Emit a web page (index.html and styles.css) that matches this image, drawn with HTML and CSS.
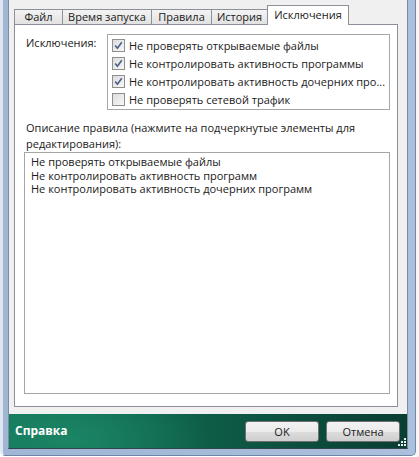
FILE: index.html
```html
<!DOCTYPE html>
<html lang="ru">
<head>
<meta charset="utf-8">
<link rel="stylesheet" href="styles.css">
</head>
<body>
<div class="screen">
  <div class="frame">
    <div class="dialog">
      <div class="tabs">
        <div class="tab t1">Файл</div>
        <div class="tab t2">Время запуска</div>
        <div class="tab t3">Правила</div>
        <div class="tab t4">История</div>
        <div class="tab active">Исключения</div>
      </div>
      <div class="panel">
        <div class="excl">
          <div class="label">Исключения:</div>
          <div class="list">
            <div class="item"><span class="cb checked"><svg viewBox="0 0 9 9" width="9" height="9"><path d="M1.2 4.6 L3.4 7.2 L7.8 1.2" fill="none" stroke="#4a5f86" stroke-width="1.6"/></svg></span>Не проверять открываемые файлы</div>
            <div class="item"><span class="cb checked"><svg viewBox="0 0 9 9" width="9" height="9"><path d="M1.2 4.6 L3.4 7.2 L7.8 1.2" fill="none" stroke="#4a5f86" stroke-width="1.6"/></svg></span>Не контролировать активность программы</div>
            <div class="item"><span class="cb checked"><svg viewBox="0 0 9 9" width="9" height="9"><path d="M1.2 4.6 L3.4 7.2 L7.8 1.2" fill="none" stroke="#4a5f86" stroke-width="1.6"/></svg></span>Не контролировать активность дочерних про...</div>
            <div class="item"><span class="cb"></span>Не проверять сетевой трафик</div>
          </div>
        </div>
        <div class="desc-label">Описание правила (нажмите на подчеркнутые элементы для редактирования):</div>
        <div class="desc">
          <div>Не проверять открываемые файлы</div>
          <div>Не контролировать активность программ</div>
          <div>Не контролировать активность дочерних программ</div>
        </div>
      </div>
      <div class="footer">
        <div class="help">Справка</div>
        <div class="buttons">
          <div class="btn">OK</div>
          <div class="btn">Отмена</div>
        </div>
        <svg class="grip" width="8" height="8" viewBox="0 0 8 8"><rect x="6" y="0" width="2" height="2" fill="#e8eef0"/><rect x="3" y="3" width="2" height="2" fill="#e8eef0"/><rect x="6" y="3" width="2" height="2" fill="#e8eef0"/><rect x="0" y="6" width="2" height="2" fill="#e8eef0"/><rect x="3" y="6" width="2" height="2" fill="#e8eef0"/><rect x="6" y="6" width="2" height="2" fill="#e8eef0"/></svg>
      </div>
    </div>
  </div>
  <div class="desktop"></div>
</div>
</body>
</html>
```
FILE: styles.css
```css
html, body {
  margin: 0;
  padding: 0;
}
body {
  width: 419px;
  height: 457px;
  overflow: hidden;
  font-family: "Open Sans", "DejaVu Sans", sans-serif;
  font-size: 11px;
  color: #1a1a1a;
  background: #ffffff;
}
.screen {
  display: flex;
  height: 457px;
}
.frame {
  width: 416px;
  box-sizing: border-box;
  height: 456px;
  background: linear-gradient(90deg, #9fb6d4, #aac0dc);
  border-left: 3px solid #dfe7f1;
  border-right: 1px solid #6f86a8;
  border-bottom: 1px solid #6f86a8;
  border-bottom-left-radius: 5px;
  border-bottom-right-radius: 5px;
  padding: 0 7px 6px 5px;
}
.desktop {
  flex: 1;
  background: #f4f6fa;
}
.dialog {
  background: #f0f0f0;
  height: 449px;
  border-left: 1px solid #7b8ba3;
  border-right: 1px solid #7b8ba3;
  border-bottom: 1px solid #33434f;
  box-sizing: border-box;
  display: flex;
  flex-direction: column;
}
.tabs {
  display: flex;
  align-items: flex-end;
  height: 19px;
  padding: 5px 0 0 5px;
  position: relative;
  z-index: 2;
}
.tab {
  height: 15px;
  box-sizing: border-box;
  border: 1px solid #8d9098;
  border-bottom: none;
  border-right: none;
  background: linear-gradient(#f3f3f3, #e2e2e2);
  padding: 0;
  text-align: center;
  white-space: nowrap;
  line-height: 14px;
}
.t1 { width: 48px; }
.t2 { width: 89px; }
.t3 { width: 60px; }
.t4 { width: 56px; }
.tab.active {
  width: 82px;
  height: 20px;
  background: #ffffff;
  border-right: 1px solid #8d9098;
  line-height: 18px;
  margin-bottom: -1px;
}
.panel {
  margin: 0 9px 0 5px;
  height: 383px;
  box-sizing: border-box;
  border: 1px solid #8d9098;
  background: #ffffff;
  padding: 9px 7px 0 9px;
  display: flex;
  flex-direction: column;
}
.excl {
  display: flex;
}
.label {
  width: 81px;
  padding-left: 2px;
  line-height: 16px;
  padding-top: 1px;
}
.list {
  flex: 1;
  border: 1px solid #a6a6a6;
  height: 76px;
  box-sizing: border-box;
  padding: 1px 0 0 4px;
  white-space: nowrap;
  overflow: hidden;
}
.item {
  display: flex;
  align-items: center;
  height: 18px;
}
.cb {
  width: 13px;
  height: 13px;
  box-sizing: border-box;
  border: 1px solid #8f8f8f;
  background: linear-gradient(135deg, #dcdcdc, #f8f8f8);
  margin-right: 4px;
  display: flex;
  align-items: center;
  justify-content: center;
  flex: none;
}
.desc-label {
  margin-top: 10px;
  padding-left: 2px;
  line-height: 16px;
  padding-right: 20px;
}
.desc {
  margin-top: 0;
  height: 242px;
  box-sizing: border-box;
  border: 1px solid #a6a6a6;
  padding: 2px 6px;
  line-height: 13.5px;
}
.footer {
  margin-top: 7px;
  flex: 1;
  display: flex;
  align-items: center;
  position: relative;
  background: radial-gradient(ellipse 140px 60px at 60px 25px, #1b8564 0%, rgba(27,133,100,0) 100%), linear-gradient(90deg, #13785a 0%, #0e5f49 45%, #0a3e33 100%);
  padding: 0 7px 0 6px;
}
.help {
  color: #ffffff;
  font-weight: bold;
  font-size: 12px;
  flex: 1;
  margin-top: -1px;
}
.buttons {
  display: flex;
  gap: 7px;
}
.btn {
  width: 74px;
  height: 21px;
  box-sizing: border-box;
  border: 1px solid #707070;
  border-radius: 3px;
  background: linear-gradient(#f2f2f2 0%, #ebebeb 50%, #dddddd 51%, #cfcfcf 100%);
  text-align: center;
  line-height: 19px;
  color: #1a1a1a;
}
.grip {
  position: absolute;
  right: 1px;
  bottom: 2px;
}
```
